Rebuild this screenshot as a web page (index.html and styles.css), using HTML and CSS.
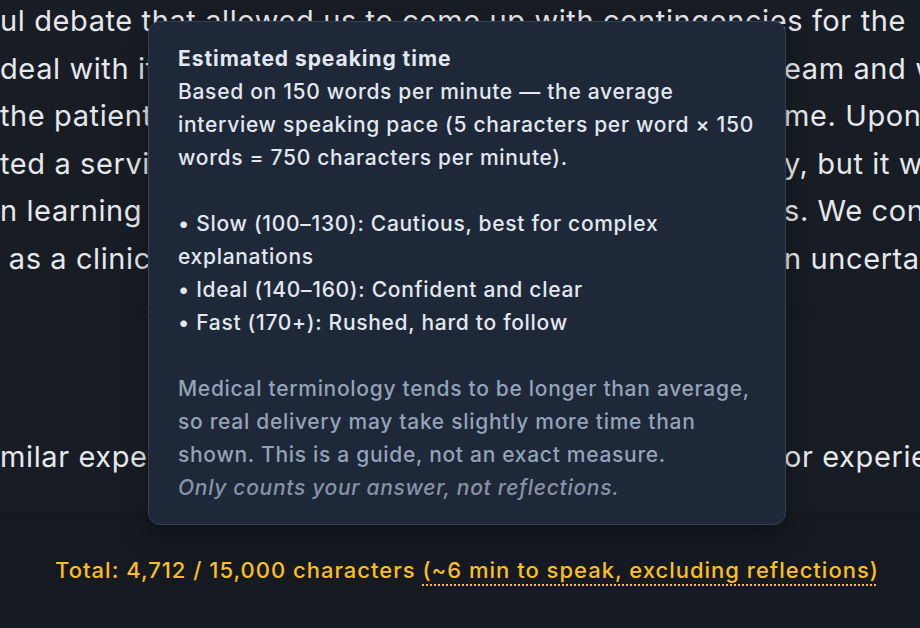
FILE: index.html
```html
<!DOCTYPE html>
<html lang="en">
<head>
<meta charset="utf-8">
<title>Estimated speaking time</title>
<link rel="stylesheet" href="styles.css">
</head>
<body>
<main class="page">
  <section class="panel answer">
    <div class="text">
      <p class="line">ul debate that allowed us to come up with contingencies for the</p>
      <p class="line split"><span class="lead">deal with it. We agreed on a clear plan with the wider team and we</span><span class="tail">eam and we</span></p>
      <p class="line split"><span class="lead">the patient, which helped build trust in a difficult time. Upon</span><span class="tail">me. Upon</span></p>
      <p class="line split"><span class="lead">ted a service improvement project to tackle the difficulty, but it was</span><span class="tail">y, but it was</span></p>
      <p class="line split"><span class="lead">n learning about the importance of clear communication skills. We con</span><span class="tail">s. We con</span></p>
      <p class="line split"><span class="lead"> as a clinician, to remain calm and thoughtful when working in uncertain</span><span class="tail">n uncertain</span></p>
    </div>
  </section>
  <section class="panel reflection">
    <p class="line split"><span class="lead">milar experience in future, I would be better prepared for experiences</span><span class="tail">or experiences</span></p>
  </section>
  <footer class="total">Total: 4,712 / 15,000 characters <span class="hint">(~6 min to speak, excluding reflections)</span></footer>

  <div class="tooltip" role="tooltip">
    <p class="tt-title">Estimated speaking time</p>
    <p>Based on 150 words per minute — the average<br>interview speaking pace (5 characters per word × 150<br>words = 750 characters per minute).</p>
    <p class="gap">• Slow (100–130): Cautious, best for complex<br>explanations<br>• Ideal (140–160): Confident and clear<br>• Fast (170+): Rushed, hard to follow</p>
    <p class="gap muted">Medical terminology tends to be longer than average,<br>so real delivery may take slightly more time than<br>shown. This is a guide, not an exact measure.<br><em>Only counts your answer, not reflections.</em></p>
  </div>
</main>
</body>
</html>
```
FILE: styles.css
```css
* { box-sizing: border-box; }
html, body { margin: 0; padding: 0; }
body {
  background: #151a22;
  font-family: Inter, "Noto Sans", "Liberation Sans", sans-serif;
  color: #e5e7eb;
  width: 920px;
  height: 628px;
  overflow: hidden;
}
.page {
  position: relative;
  height: 628px;
  display: flex;
  flex-direction: column;
}
p { margin: 0; }
.panel {
  background: #181c24;
  overflow: hidden;
}
.answer {
  height: 313px;
  border-bottom: 2px solid #13171e;
}
.answer .text { margin-top: -3px; }
.line {
  font-size: 29px;
  letter-spacing: 0.6px;
  line-height: 47.6px;
  white-space: pre;
  color: #e6e8ec;
}
.split { display: flex; }
.lead {
  flex: none;
  width: 784px;
  min-width: 0;
  max-width: 784px;
  overflow: hidden;
}
.tail { flex: none; }
.reflection {
  height: 200px;
  padding-top: 120px;
  border-bottom: 2px solid #13171e;
}
.total {
  padding-top: 44px;
  text-align: center;
  padding-left: 14px;
  font-size: 22px;
  letter-spacing: 1px;
  font-weight: 500;
  color: #fbbf24;
}
.hint {
  text-decoration: underline dotted;
  text-decoration-thickness: 2px;
  text-underline-offset: 6px;
}
.tooltip {
  position: absolute;
  left: 148px;
  top: 21px;
  width: 638px;
  padding: 20px 20px 20px 29px;
  background: #1f2839;
  border: 1px solid #334155;
  border-radius: 12px;
  box-shadow: 0 10px 25px rgba(0, 0, 0, 0.35);
  font-size: 21px;
  letter-spacing: 0.7px;
  line-height: 33px;
  font-weight: 500;
  color: #e2e8f0;
  white-space: nowrap;
}
.tt-title { font-weight: 700; letter-spacing: 0.95px; }
.gap { margin-top: 33px; }
.muted { color: #94a3b8; }
.muted em { color: #8893a5; }
```
